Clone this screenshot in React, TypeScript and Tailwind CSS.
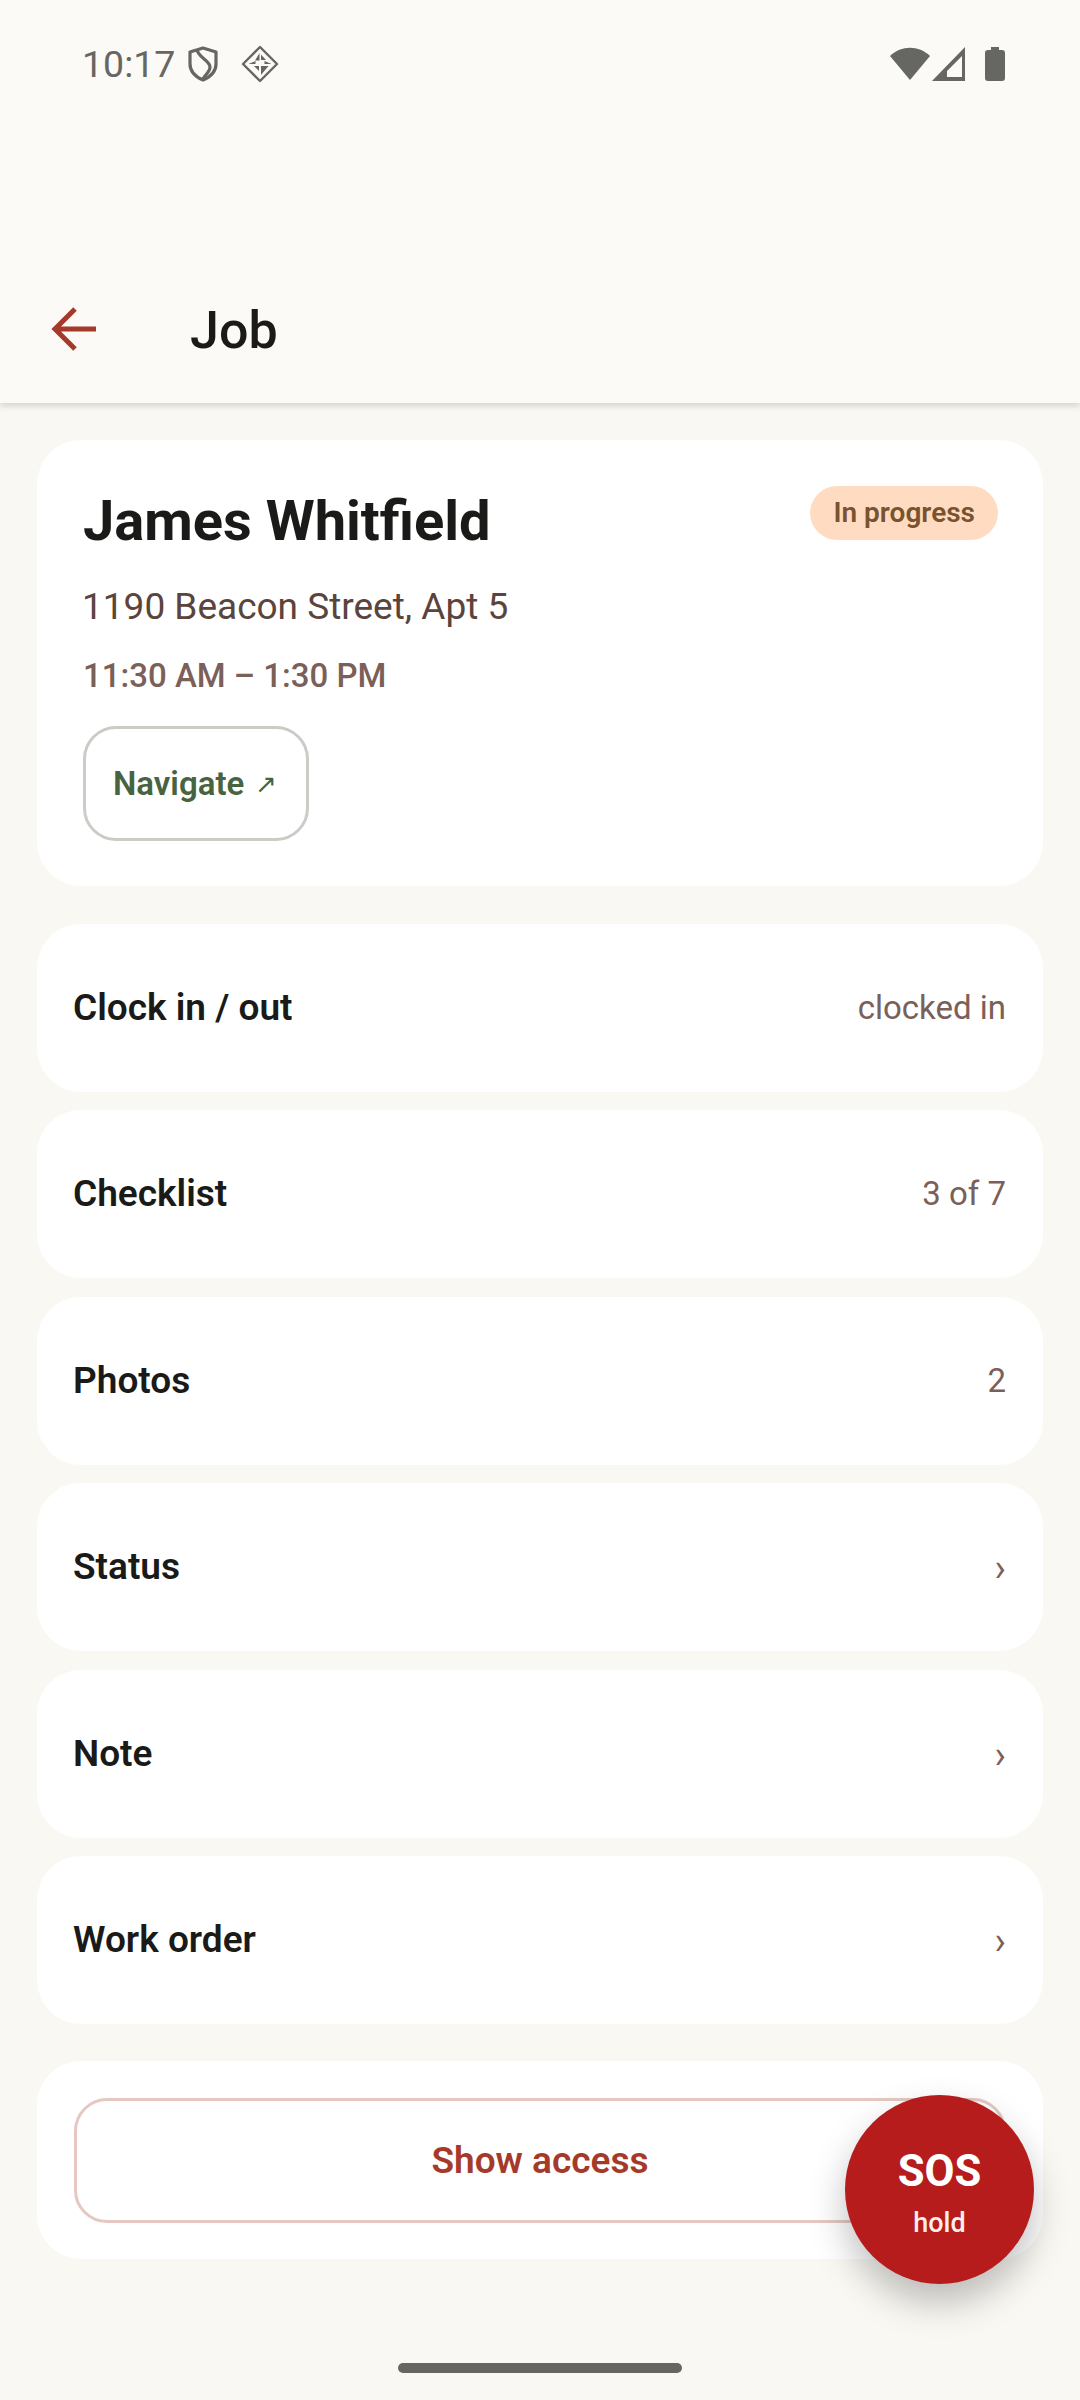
const rows: [string, string, boolean][] = [
  ["Clock in / out", "clocked in", false],
  ["Checklist", "3 of 7", false],
  ["Photos", "2", false],
  ["Status", "›", true],
  ["Note", "›", true],
  ["Work order", "›", true],
];

function StatusBar() {
  return (
    <div className="flex h-[255px] items-start justify-between pl-[82px] pr-[75px] pt-[44px] text-[#666663]">
      <div className="flex items-center">
        <span className="text-[37.5px] leading-[40px]">10:17</span>
        <svg className="ml-[13px]" width="30" height="36" viewBox="0 0 30 36" fill="none" stroke="#666663" strokeWidth="3.2">
          <path d="M15 2 L28 6 V18 C28 26 22 31 15 34 C8 31 2 26 2 18 V6 Z" strokeLinejoin="round" />
          <path d="M9 3 C9 11 22 14 22 21 C22 26 17 29 15 33" />
        </svg>
        <svg className="ml-[23px]" width="38" height="38" viewBox="0 0 38 38" fill="none">
          <path d="M19 2 L36 19 L19 36 L2 19 Z" stroke="#666663" strokeWidth="2.4" strokeLinejoin="round" />
          <path
            d="M18.5 8 V15.5 L14 15.5 Z M20 9.5 L25 15 H20 Z M7.5 19 L14.5 16 V19 Z M30.5 19 L23.5 16 V19 Z M13 21 H18 V26 Z M20 21 H27.5 L20 30 Z"
            fill="#666663"
          />
        </svg>
      </div>
      <div className="flex items-center pt-[3px]">
        <svg width="40" height="34" viewBox="0 0 40 34" fill="#666663">
          <path d="M0 9 C11 -2 29 -2 40 9 L20 33 Z" />
        </svg>
        <svg className="ml-[2px]" width="34" height="34" viewBox="0 0 34 34">
          <path fillRule="evenodd" fill="#666663" d="M33 0 V34 H0 Z M30 9 L15 24 V30 H30 Z" />
        </svg>
        <svg className="ml-[19px]" width="20" height="34" viewBox="0 0 20 34" fill="#666663">
          <path d="M6 0 H14 V3 H17 Q20 3 20 6 V31 Q20 34 17 34 H3 Q0 34 0 31 V6 Q0 3 3 3 H6 Z" />
        </svg>
      </div>
    </div>
  );
}

export default function App() {
  return (
    <div
      className="relative flex h-[2400px] w-[1080px] flex-col overflow-hidden bg-[#f9f8f3] text-[#1a1a18]"
      style={{ fontFamily: "Roboto, sans-serif" }}
    >
      <header className="z-10 h-[403px] bg-[#fbfaf6] shadow-[0_3px_6px_rgba(90,60,50,0.2)]">
        <StatusBar />
        <div className="flex h-[148px] items-center">
          <svg className="ml-[51px]" width="46" height="46" viewBox="0 0 46 46" fill="none" stroke="#a63a2a" strokeWidth="5">
            <path d="M45 23 H5 M24 3 L4 23 L24 43" />
          </svg>
          <span className="ml-[93px] pt-[3px] text-[52px] font-medium leading-[64px]">Job</span>
        </div>
      </header>

      <main className="flex flex-col gap-[18.5px] px-[37px] pt-[37px]">
        <section className="relative mb-[19px] h-[446px] rounded-[44px] bg-white pl-[46px] pt-[49px]">
          <span className="absolute right-[45px] top-[46px] rounded-full bg-[#ffdcc1] px-[23px] py-[9px] text-[28px] font-semibold leading-[36px] text-[#7a5230]">
            In progress
          </span>
          <h1 className="text-[56px] font-bold leading-[64px]">James Whitfield</h1>
          <p className="-ml-[1px] mt-[30px] text-[37px] leading-[48px] text-[#5a443c]">1190 Beacon Street, Apt 5</p>
          <p className="mt-[24px] text-[33px] font-medium leading-[42px] text-[#7a6058]">11:30 AM – 1:30 PM</p>
          <button className="mt-[29px] flex h-[115px] w-[226px] items-center rounded-[33px] border-[3px] border-[#cccbc5] pl-[27px] pt-[1px] text-[33px] font-semibold text-[#47633f]">
            Navigate<span className="ml-[11px] text-[26px] font-normal">↗</span>
          </button>
        </section>

        {rows.map(([label, value, chevron]) => (
          <div key={label} className="flex h-[168px] items-center justify-between rounded-[44px] bg-white pl-[36px] pr-[37px]">
            <span className="text-[37px] font-semibold leading-[44px]">{label}</span>
            <span className={`${chevron ? "pt-[2px] text-[38px]" : "text-[33px]"} leading-[44px] text-[#7a6058]`}>{value}</span>
          </div>
        ))}

        <section className="mt-[18.5px] rounded-[44px] bg-white px-[37px] pb-[36px] pt-[37px]">
          <button className="flex h-[125px] w-full items-center justify-center rounded-[33px] border-[3px] border-[#e5c8c2] text-[37px] font-semibold text-[#a63a2a]">
            Show access
          </button>
        </section>
      </main>

      <button className="absolute left-[845px] top-[2095px] z-20 flex h-[189px] w-[189px] flex-col items-center justify-center rounded-full bg-[#b71c1c] pt-[9px] text-white shadow-[0_18px_36px_rgba(0,0,0,0.25)]">
        <span className="text-[43.5px] font-bold leading-[50px]">SOS</span>
        <span className="mt-[8px] text-[27px] font-medium leading-[36px] text-[#f9eeec]">hold</span>
      </button>

      <div className="absolute left-[398px] top-[2363px] h-[10px] w-[284px] rounded-full bg-[#666663]" />
    </div>
  );
}
